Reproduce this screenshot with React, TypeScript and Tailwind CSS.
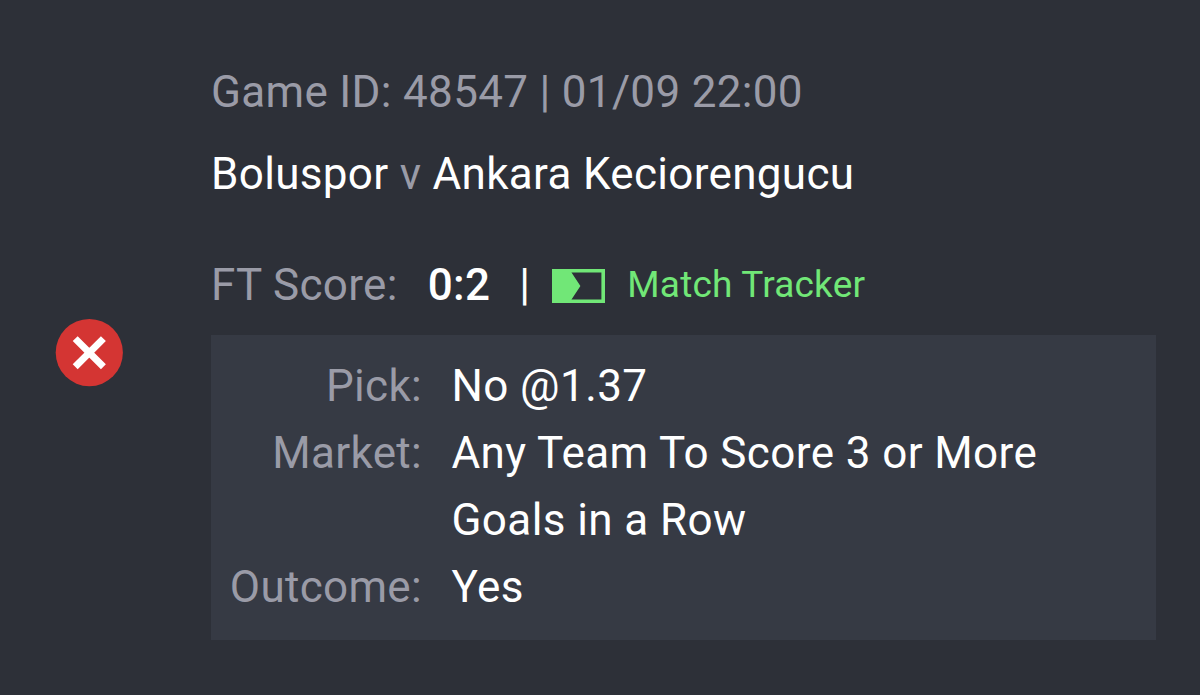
type Row = {
  label: string;
  value: string;
};

const rows: Row[] = [
  { label: 'Pick:', value: 'No @1.37' },
  { label: 'Market:', value: 'Any Team To Score 3 or More Goals in a Row' },
  { label: 'Outcome:', value: 'Yes' },
];

function LostIcon() {
  return (
    <svg viewBox="0 0 68 68" className="w-[68px] h-[68px] shrink-0">
      <circle cx="34.3" cy="33.6" r="33.6" fill="#d43533" />
      <path d="M20.2 19.6 48.4 47.8M48.4 19.6 20.2 47.8" stroke="#fff" strokeWidth="7" />
    </svg>
  );
}

function TrackerIcon() {
  return (
    <svg viewBox="0 0 53 34" className="w-[53px] h-[34px] shrink-0">
      <path d="M1.8 1.8H51.2V32.2H1.8Z" fill="none" stroke="#71e777" strokeWidth="3.6" />
      <path d="M0 0H19.5V3.6L28.4 17 19.5 30.4V34H0Z" fill="#71e777" />
    </svg>
  );
}

export default function App() {
  return (
    <div className="w-[1200px] h-[695px] bg-[#2d3038] text-white font-[Roboto,sans-serif] text-[44px] leading-[67px] tracking-[0.32px] flex overflow-hidden">
      <div className="w-[211px] shrink-0 flex items-center pl-[55px] pt-[10px]">
        <LostIcon />
      </div>
      <div className="w-[945px] pt-[59px] whitespace-nowrap">
        <div className="text-[#9a9ba7]">Game ID: 48547 | 01/09 22:00</div>
        <div className="mt-[15px]">
          Boluspor <span className="text-[#9a9ba7]">v</span> Ankara Keciorengucu
        </div>
        <div className="mt-[44px] h-[67px] flex items-center">
          <span className="text-[#9a9ba7]">FT Score:</span>
          <span className="ml-[30px] font-medium">0:2</span>
          <span className="ml-[29px]">|</span>
          <div className="ml-[22px] flex items-center gap-[22px] text-[#71e777] text-[37px] tracking-[0.2px]">
            <TrackerIcon />
            <span className="pb-[2px]">Match Tracker</span>
          </div>
        </div>
        <div className="mt-[16px] h-[305px] bg-[#363a44] pt-[18px]">
          {rows.map((r) => (
            <div key={r.label} className="flex">
              <div className="w-[211px] shrink-0 text-right text-[#9a9ba7]">{r.label}</div>
              <div className="ml-[29.5px] w-[640px] whitespace-normal tracking-[0.4px]">{r.value}</div>
            </div>
          ))}
        </div>
      </div>
    </div>
  );
}
